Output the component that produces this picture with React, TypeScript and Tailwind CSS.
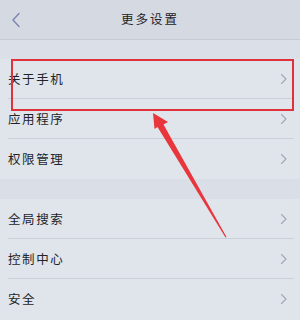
import React from "react";

const Chevron = () => (
  <svg width="8" height="12" viewBox="0 0 8 12" className="shrink-0">
    <path d="M1.5 1.5 L6 6 L1.5 10.5" fill="none" stroke="#a3a8b2" strokeWidth="1.1" strokeLinecap="round" strokeLinejoin="round" />
  </svg>
);

const Row = ({ label, last }: { label: string; last?: boolean }) => (
  <div className="relative h-[40px] flex items-center justify-between pl-[8px] pr-[12px]">
    <span className="text-[12.5px] tracking-[1.6px] text-[#222428]">{label}</span>
    <Chevron />
    {!last && <div className="absolute left-[8px] right-[6px] bottom-0 h-px bg-[#cbcfd7]" />}
  </div>
);

export default function App() {
  return (
    <div
      className="relative w-[300px] h-[320px] overflow-hidden bg-[#e0e4eb]"
      style={{ fontFamily: '"Noto Sans CJK SC", "Noto Sans", sans-serif' }}
    >
      <div className="relative h-[40px] flex items-center justify-center bg-[#d5d9e1] border-b border-[#c6cad2]">
        <svg width="10" height="16" viewBox="0 0 10 16" className="absolute left-[11px] top-[12px]">
          <path d="M8 1.5 L2 8 L8 14.5" fill="none" stroke="#7c86b4" strokeWidth="1.4" strokeLinecap="round" strokeLinejoin="round" />
        </svg>
        <span className="text-[12.5px] tracking-[2px] text-[#222428]">更多设置</span>
      </div>
      <div className="h-[19px] bg-[#dbdfe7]" />
      <div className="bg-[#e0e4eb]">
        <Row label="关于手机" />
        <Row label="应用程序" />
        <Row label="权限管理" last />
      </div>
      <div className="h-[20px] bg-[#dadee6]" />
      <div className="bg-[#e0e4eb]">
        <Row label="全局搜索" />
        <Row label="控制中心" />
        <Row label="安全" last />
      </div>

      {/* highlight box */}
      <div className="absolute left-[11px] top-[59px] w-[283px] h-[52px] border-2 border-[#e0323c]" />

      {/* arrow */}
      <svg className="absolute left-0 top-0" width="300" height="320" viewBox="0 0 300 320">
        <polygon
          points="153,113 168,122 163.5,124.5 226.5,237 225.5,237.5 157.5,127 154.5,129"
          fill="#e8363c"
        />
      </svg>
    </div>
  );
}
